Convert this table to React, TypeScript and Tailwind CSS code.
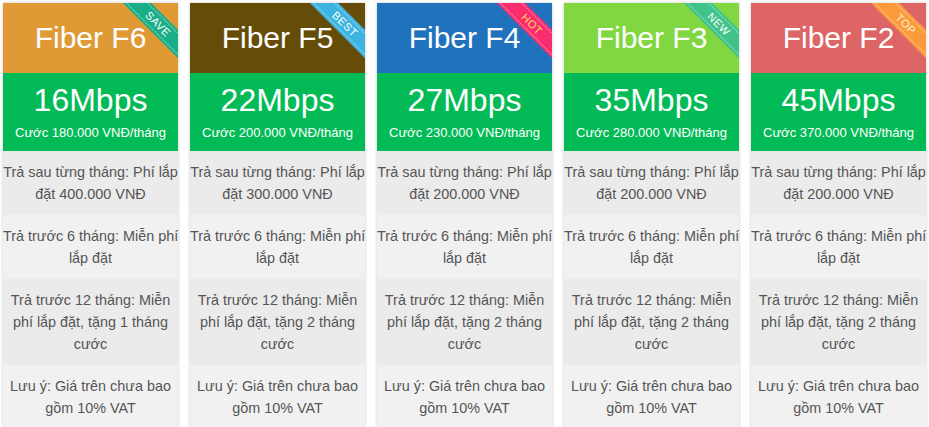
type Plan = {
  name: string;
  speed: string;
  price: string;
  headerClass: string;
  ribbon: string;
  ribbonClass: string;
  rows: string[][];
};

const plans: Plan[] = [
  {
    name: "Fiber F6",
    speed: "16Mbps",
    price: "Cước 180.000 VNĐ/tháng",
    headerClass: "bg-[#df9a36]",
    ribbon: "SAVE",
    ribbonClass: "bg-[#19ae88] text-white",
    rows: [
      ["Trả sau từng tháng: Phí lắp", "đặt 400.000 VNĐ"],
      ["Trả trước 6 tháng: Miễn phí", "lắp đặt"],
      ["Trả trước 12 tháng: Miễn", "phí lắp đặt, tặng 1 tháng", "cước"],
      ["Lưu ý: Giá trên chưa bao", "gồm 10% VAT"],
    ],
  },
  {
    name: "Fiber F5",
    speed: "22Mbps",
    price: "Cước 200.000 VNĐ/tháng",
    headerClass: "bg-[#654d09]",
    ribbon: "BEST",
    ribbonClass: "bg-[#3db4df] text-white",
    rows: [
      ["Trả sau từng tháng: Phí lắp", "đặt 300.000 VNĐ"],
      ["Trả trước 6 tháng: Miễn phí", "lắp đặt"],
      ["Trả trước 12 tháng: Miễn", "phí lắp đặt, tặng 2 tháng", "cước"],
      ["Lưu ý: Giá trên chưa bao", "gồm 10% VAT"],
    ],
  },
  {
    name: "Fiber F4",
    speed: "27Mbps",
    price: "Cước 230.000 VNĐ/tháng",
    headerClass: "bg-[#2172bc]",
    ribbon: "HOT",
    ribbonClass: "bg-[#f92d6e] text-[#ffd45e]",
    rows: [
      ["Trả sau từng tháng: Phí lắp", "đặt 200.000 VNĐ"],
      ["Trả trước 6 tháng: Miễn phí", "lắp đặt"],
      ["Trả trước 12 tháng: Miễn", "phí lắp đặt, tặng 2 tháng", "cước"],
      ["Lưu ý: Giá trên chưa bao", "gồm 10% VAT"],
    ],
  },
  {
    name: "Fiber F3",
    speed: "35Mbps",
    price: "Cước 280.000 VNĐ/tháng",
    headerClass: "bg-[#81d742]",
    ribbon: "NEW",
    ribbonClass: "bg-[#40c28b] text-white",
    rows: [
      ["Trả sau từng tháng: Phí lắp", "đặt 200.000 VNĐ"],
      ["Trả trước 6 tháng: Miễn phí", "lắp đặt"],
      ["Trả trước 12 tháng: Miễn", "phí lắp đặt, tặng 2 tháng", "cước"],
      ["Lưu ý: Giá trên chưa bao", "gồm 10% VAT"],
    ],
  },
  {
    name: "Fiber F2",
    speed: "45Mbps",
    price: "Cước 370.000 VNĐ/tháng",
    headerClass: "bg-[#dd6565]",
    ribbon: "TOP",
    ribbonClass: "bg-[#fc9a3b] text-[#fff3d6]",
    rows: [
      ["Trả sau từng tháng: Phí lắp", "đặt 200.000 VNĐ"],
      ["Trả trước 6 tháng: Miễn phí", "lắp đặt"],
      ["Trả trước 12 tháng: Miễn", "phí lắp đặt, tặng 2 tháng", "cước"],
      ["Lưu ý: Giá trên chưa bao", "gồm 10% VAT"],
    ],
  },
];

function Ribbon({ label, className }: { label: string; className: string }) {
  return (
    <div className="absolute top-0 right-0 h-[62px] w-[62px] overflow-hidden">
      <div
        className={`absolute left-[-8px] top-[11px] flex h-[20px] w-[100px] rotate-45 items-center justify-center text-[11px] leading-none tracking-[0.5px] ${className}`}
      >
        <span className="absolute inset-x-0 inset-y-[2px] border-y border-dotted border-white/60" />
        <span className="relative">{label}</span>
      </div>
    </div>
  );
}

function PlanCard({ plan }: { plan: Plan }) {
  return (
    <div className="w-[175px] shrink-0 bg-white shadow-[0_0_3px_rgba(0,0,0,0.22)]">
      <div className={`relative flex h-[70px] items-center justify-center text-white ${plan.headerClass}`}>
        <span className="text-[30px] leading-[36px]">{plan.name}</span>
        <Ribbon label={plan.ribbon} className={plan.ribbonClass} />
      </div>

      <div className="flex h-[78px] flex-col items-center bg-[#02bb56] pt-[9px] text-white">
        <span className="text-[32px] leading-[36px]">{plan.speed}</span>
        <span className="mt-[6px] text-[13px] leading-[18px]">{plan.price}</span>
      </div>

      {plan.rows.map((lines, i) => (
        <div
          key={i}
          className={`py-[10px] text-center text-[14.4px] leading-[22px] text-[#555] ${
            i % 2 === 0 ? "bg-[#ebebeb]" : "bg-[#f1f1f1]"
          }`}
        >
          {lines.map((line) => (
            <div key={line} className="whitespace-nowrap">
              {line}
            </div>
          ))}
        </div>
      ))}
    </div>
  );
}

export default function App() {
  return (
    <div
      className="h-[427px] w-[929px] overflow-hidden bg-white"
      style={{ fontFamily: '"Liberation Sans", Arial, sans-serif' }}
    >
      <div className="flex gap-[12px] px-[3px] pt-[3px]">
        {plans.map((plan) => (
          <PlanCard key={plan.name} plan={plan} />
        ))}
      </div>
    </div>
  );
}
